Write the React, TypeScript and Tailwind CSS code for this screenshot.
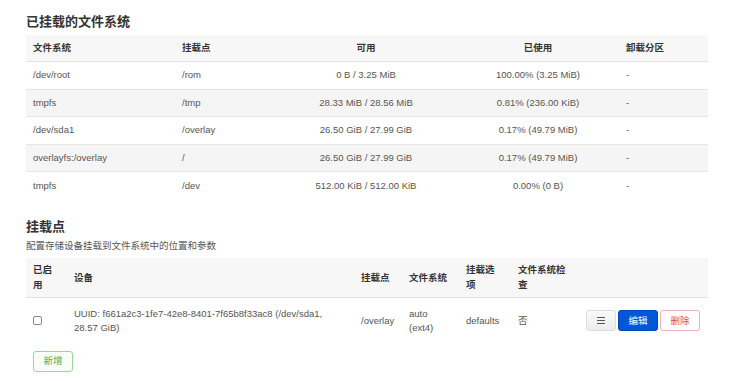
import React from "react";

const font = { fontFamily: '"Liberation Sans", Arial, "Noto Sans CJK SC", sans-serif' };

const rows1 = [
  ["/dev/root", "/rom", "0 B / 3.25 MiB", "100.00% (3.25 MiB)", "-"],
  ["tmpfs", "/tmp", "28.33 MiB / 28.56 MiB", "0.81% (236.00 KiB)", "-"],
  ["/dev/sda1", "/overlay", "26.50 GiB / 27.99 GiB", "0.17% (49.79 MiB)", "-"],
  ["overlayfs:/overlay", "/", "26.50 GiB / 27.99 GiB", "0.17% (49.79 MiB)", "-"],
  ["tmpfs", "/dev", "512.00 KiB / 512.00 KiB", "0.00% (0 B)", "-"],
];

export default function App() {
  return (
    <div className="w-[740px] h-[381px] bg-white overflow-hidden" style={font}>
      <div className="ml-[26px] w-[682px] pt-[13px]">
        <h2 className="text-[13px] font-bold text-[#333] leading-[18px] h-[22px]">已挂载的文件系统</h2>
        <div className="text-[9.5px] text-[#555]">
          <div className="grid grid-cols-[149px_100px_182px_162px_1fr] h-[27px] items-center bg-[#f7f7f7] border-b border-[#e2e2e2] font-bold text-[#333]">
            <div className="pl-[7px]">文件系统</div>
            <div className="pl-[7px]">挂载点</div>
            <div className="text-center">可用</div>
            <div className="text-center">已使用</div>
            <div className="pl-[7px]">卸载分区</div>
          </div>
          {rows1.map((r, i) => (
            <div
              key={i}
              className={
                "grid grid-cols-[149px_100px_182px_162px_1fr] h-[27.6px] items-center " +
                (i < rows1.length - 1 ? "border-b border-[#e6e6e6] " : "") +
                (i % 2 === 1 ? "bg-[#f5f5f5]" : "bg-white")
              }
            >
              <div className="pl-[7px]">{r[0]}</div>
              <div className="pl-[7px]">{r[1]}</div>
              <div className="text-center">{r[2]}</div>
              <div className="text-center">{r[3]}</div>
              <div className="pl-[7px]">{r[4]}</div>
            </div>
          ))}
        </div>

        <h2 className="mt-[18px] text-[13px] font-bold text-[#333] leading-[18px]">挂载点</h2>
        <p className="mt-[3px] text-[9.5px] text-[#555] leading-[13px]">配置存储设备挂载到文件系统中的位置和参数</p>

        <div className="mt-[6px] text-[9.5px] text-[#555]">
          <div className="grid grid-cols-[41px_287px_48px_57px_52px_1fr] h-[40px] items-center bg-[#f7f7f7] border-b border-[#e2e2e2] font-bold text-[#333] leading-[15px]">
            <div className="pl-[7px] w-[32px]">已启用</div>
            <div className="pl-[7px]">设备</div>
            <div className="pl-[7px]">挂载点</div>
            <div className="pl-[7px]">文件系统</div>
            <div className="pl-[7px] w-[38px]">挂载选项</div>
            <div className="pl-[7px] w-[56px]">文件系统检查</div>
          </div>
          <div className="grid grid-cols-[41px_287px_48px_57px_52px_1fr] h-[46px] items-center leading-[14px]">
            <div className="pl-[7px]">
              <span className="block w-[9px] h-[9px] border border-[#888] rounded-[2px] bg-white"></span>
            </div>
            <div className="pl-[7px] pr-[10px]">UUID: f661a2c3-1fe7-42e8-8401-7f65b8f33ac8 (/dev/sda1, 28.57 GiB)</div>
            <div className="pl-[7px]">/overlay</div>
            <div className="pl-[7px]">auto<br />(ext4)</div>
            <div className="pl-[7px]">defaults</div>
            <div className="flex items-center">
              <div className="pl-[7px] w-[75px]">否</div>
              <div className="flex items-center gap-[2px]">
                <button className="w-[30px] h-[21px] flex items-center justify-center rounded-[3px] border border-[#dcdcdc] bg-gradient-to-b from-[#fafafa] to-[#ececec]">
                  <svg width="8" height="7" viewBox="0 0 8 7">
                    <path d="M0 0.5H8M0 3.5H8M0 6.5H8" stroke="#555" strokeWidth="1" />
                  </svg>
                </button>
                <button className="w-[40px] h-[21px] rounded-[3px] bg-[#0456d8] border border-[#0347b8] text-white text-[9.5px]">编辑</button>
                <button className="w-[40px] h-[21px] rounded-[3px] bg-white border border-[#eeb3b3] text-[#d9534f] text-[9.5px]">删除</button>
              </div>
            </div>
          </div>
        </div>

        <button className="mt-[7px] ml-[7px] w-[40px] h-[21px] rounded-[3px] border border-[#9fd49f] bg-[#f8fdf8] text-[#4cae4c] text-[9.5px]">新增</button>
      </div>
    </div>
  );
}
